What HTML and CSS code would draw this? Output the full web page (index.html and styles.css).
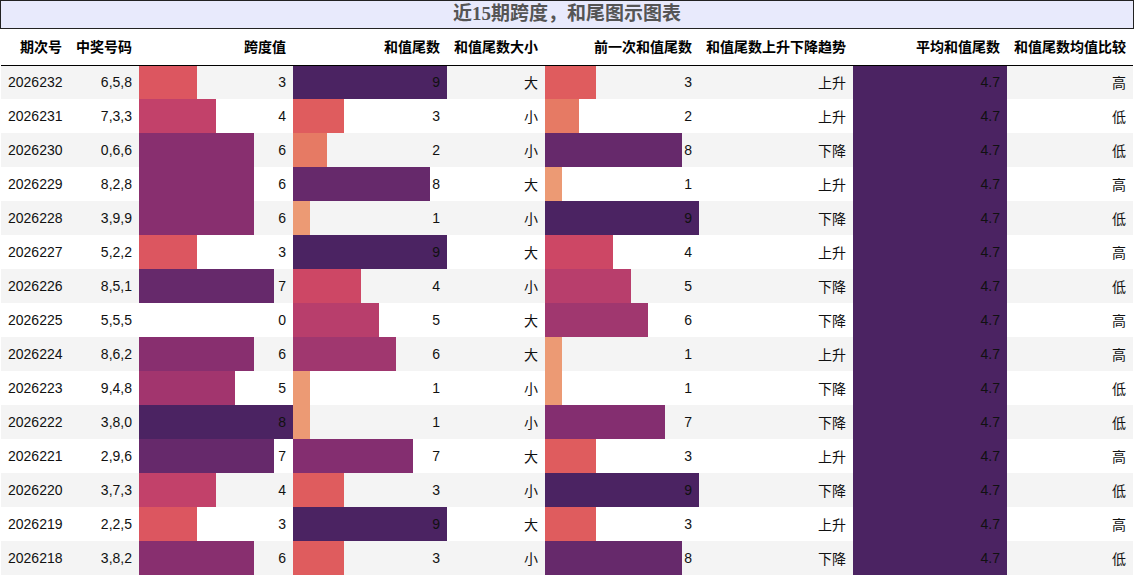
FILE: index.html
```html
<!DOCTYPE html>
<html lang="zh">
<head>
<meta charset="utf-8">
<title>近15期跨度，和尾图示图表</title>
<link rel="stylesheet" href="styles.css">
</head>
<body>
<div class="title">近15期跨度，和尾图示图表</div>
<table class="grid">
<thead>
<tr>
<th class="c1">期次号</th><th class="c2">中奖号码</th><th class="cb">跨度值</th><th class="cb">和值尾数</th><th class="c5">和值尾数大小</th><th class="cb">前一次和值尾数</th><th class="cb">和值尾数上升下降趋势</th><th class="cb">平均和值尾数</th><th class="c9">和值尾数均值比较</th>
</tr>
</thead>
<tbody>
<tr><td class="l">2026232</td><td>6,5,8</td><td class="bar" style="--w:37.5%;--c:#dc5660">3</td><td class="bar" style="--w:100%;--c:#4b2362">9</td><td>大</td><td class="bar" style="--w:33.33%;--c:#df5c5e">3</td><td>上升</td><td class="bar" style="--w:100%;--c:#4b2362">4.7</td><td>高</td></tr>
<tr><td class="l">2026231</td><td>7,3,3</td><td class="bar" style="--w:50%;--c:#c2416a">4</td><td class="bar" style="--w:33.33%;--c:#df5c5e">3</td><td>小</td><td class="bar" style="--w:22.22%;--c:#e67a64">2</td><td>上升</td><td class="bar" style="--w:100%;--c:#4b2362">4.7</td><td>低</td></tr>
<tr><td class="l">2026230</td><td>0,6,6</td><td class="bar" style="--w:75%;--c:#882f6f">6</td><td class="bar" style="--w:22.22%;--c:#e67a64">2</td><td>小</td><td class="bar" style="--w:88.89%;--c:#66296b">8</td><td>下降</td><td class="bar" style="--w:100%;--c:#4b2362">4.7</td><td>低</td></tr>
<tr><td class="l">2026229</td><td>8,2,8</td><td class="bar" style="--w:75%;--c:#882f6f">6</td><td class="bar" style="--w:88.89%;--c:#66296b">8</td><td>大</td><td class="bar" style="--w:11.11%;--c:#ec9a74">1</td><td>上升</td><td class="bar" style="--w:100%;--c:#4b2362">4.7</td><td>高</td></tr>
<tr><td class="l">2026228</td><td>3,9,9</td><td class="bar" style="--w:75%;--c:#882f6f">6</td><td class="bar" style="--w:11.11%;--c:#ec9a74">1</td><td>小</td><td class="bar" style="--w:100%;--c:#4b2362">9</td><td>下降</td><td class="bar" style="--w:100%;--c:#4b2362">4.7</td><td>低</td></tr>
<tr><td class="l">2026227</td><td>5,2,2</td><td class="bar" style="--w:37.5%;--c:#dc5660">3</td><td class="bar" style="--w:100%;--c:#4b2362">9</td><td>大</td><td class="bar" style="--w:44.44%;--c:#cd4765">4</td><td>上升</td><td class="bar" style="--w:100%;--c:#4b2362">4.7</td><td>高</td></tr>
<tr><td class="l">2026226</td><td>8,5,1</td><td class="bar" style="--w:87.5%;--c:#66296b">7</td><td class="bar" style="--w:44.44%;--c:#cd4765">4</td><td>小</td><td class="bar" style="--w:55.56%;--c:#b83e6c">5</td><td>下降</td><td class="bar" style="--w:100%;--c:#4b2362">4.7</td><td>低</td></tr>
<tr><td class="l">2026225</td><td>5,5,5</td><td class="bar" style="--w:0%;--c:transparent">0</td><td class="bar" style="--w:55.56%;--c:#b83e6c">5</td><td>大</td><td class="bar" style="--w:66.67%;--c:#a0376f">6</td><td>下降</td><td class="bar" style="--w:100%;--c:#4b2362">4.7</td><td>高</td></tr>
<tr><td class="l">2026224</td><td>8,6,2</td><td class="bar" style="--w:75%;--c:#882f6f">6</td><td class="bar" style="--w:66.67%;--c:#a0376f">6</td><td>大</td><td class="bar" style="--w:11.11%;--c:#ec9a74">1</td><td>上升</td><td class="bar" style="--w:100%;--c:#4b2362">4.7</td><td>高</td></tr>
<tr><td class="l">2026223</td><td>9,4,8</td><td class="bar" style="--w:62.5%;--c:#a2356e">5</td><td class="bar" style="--w:11.11%;--c:#ec9a74">1</td><td>小</td><td class="bar" style="--w:11.11%;--c:#ec9a74">1</td><td>下降</td><td class="bar" style="--w:100%;--c:#4b2362">4.7</td><td>低</td></tr>
<tr><td class="l">2026222</td><td>3,8,0</td><td class="bar" style="--w:100%;--c:#4b2362">8</td><td class="bar" style="--w:11.11%;--c:#ec9a74">1</td><td>小</td><td class="bar" style="--w:77.78%;--c:#842e70">7</td><td>下降</td><td class="bar" style="--w:100%;--c:#4b2362">4.7</td><td>低</td></tr>
<tr><td class="l">2026221</td><td>2,9,6</td><td class="bar" style="--w:87.5%;--c:#66296b">7</td><td class="bar" style="--w:77.78%;--c:#842e70">7</td><td>大</td><td class="bar" style="--w:33.33%;--c:#df5c5e">3</td><td>上升</td><td class="bar" style="--w:100%;--c:#4b2362">4.7</td><td>高</td></tr>
<tr><td class="l">2026220</td><td>3,7,3</td><td class="bar" style="--w:50%;--c:#c2416a">4</td><td class="bar" style="--w:33.33%;--c:#df5c5e">3</td><td>小</td><td class="bar" style="--w:100%;--c:#4b2362">9</td><td>下降</td><td class="bar" style="--w:100%;--c:#4b2362">4.7</td><td>低</td></tr>
<tr><td class="l">2026219</td><td>2,2,5</td><td class="bar" style="--w:37.5%;--c:#dc5660">3</td><td class="bar" style="--w:100%;--c:#4b2362">9</td><td>大</td><td class="bar" style="--w:33.33%;--c:#df5c5e">3</td><td>上升</td><td class="bar" style="--w:100%;--c:#4b2362">4.7</td><td>高</td></tr>
<tr><td class="l">2026218</td><td>3,8,2</td><td class="bar" style="--w:75%;--c:#882f6f">6</td><td class="bar" style="--w:33.33%;--c:#df5c5e">3</td><td>小</td><td class="bar" style="--w:88.89%;--c:#66296b">8</td><td>下降</td><td class="bar" style="--w:100%;--c:#4b2362">4.7</td><td>低</td></tr>
</tbody>
</table>
</body>
</html>
```
FILE: styles.css
```css
html, body {
  margin: 0;
  padding: 0;
  background: #ffffff;
}

body {
  font-family: "Liberation Sans", "Noto Sans CJK SC", sans-serif;
  font-size: 14px;
  color: #111111;
}

.title {
  box-sizing: border-box;
  height: 29px;
  border: 1px solid #222222;
  background: #e8eafc;
  color: #555555;
  font-family: "Liberation Serif", "Noto Sans CJK SC", serif;
  font-weight: bold;
  font-size: 19px;
  line-height: 26px;
  text-align: center;
}

.grid {
  border-collapse: collapse;
  border-spacing: 0;
  table-layout: fixed;
  width: 1132px;
  margin: 0 1px;
}

.grid th {
  box-sizing: border-box;
  height: 36px;
  padding: 0 7px 1px;
  text-align: right;
  font-family: "Noto Sans CJK SC", sans-serif;
  font-weight: bold;
  font-size: 14px;
  color: #000000;
  border-bottom: 1px solid #000000;
  white-space: nowrap;
}

.grid .c1 { width: 68px; }
.grid .c2 { width: 70px; }
.grid .cb { width: 154px; }
.grid .c5 { width: 98px; }
.grid .c9 { width: 126px; }

.grid td {
  box-sizing: border-box;
  height: 34px;
  padding: 0 7px;
  text-align: right;
  white-space: nowrap;
  color: #111111;
}

.grid td.l {
  text-align: left;
}

.grid tbody tr:nth-child(odd) td {
  background-color: #f4f4f4;
}

.grid tbody tr:nth-child(odd) td.bar,
.grid tbody tr:nth-child(even) td.bar {
  background-image: linear-gradient(90deg, var(--c) var(--w), transparent var(--w));
}
```
